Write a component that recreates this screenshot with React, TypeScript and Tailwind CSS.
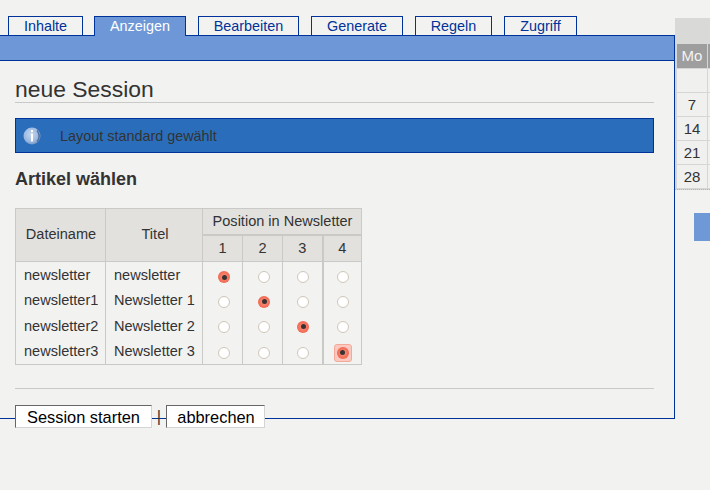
const tabs = [
  { label: 'Inhalte', width: 'w-[75px]' },
  { label: 'Anzeigen', width: 'w-[92px]', active: true },
  { label: 'Bearbeiten', width: 'w-[101px]' },
  { label: 'Generate', width: 'w-[92px]' },
  { label: 'Regeln', width: 'w-[77px]' },
  { label: 'Zugriff', width: 'w-[73px]' },
];

const rows = [
  { file: 'newsletter', title: 'newsletter', height: 'h-[25px]', text: 'pt-[3px]', radio: 'pt-[6px]' },
  { file: 'newsletter1', title: 'Newsletter 1', height: 'h-[26px]', text: 'pt-[3px]', radio: 'pt-[6px]' },
  { file: 'newsletter2', title: 'Newsletter 2', height: 'h-[26px]', text: 'pt-[3px]', radio: 'pt-[5px]' },
  { file: 'newsletter3', title: 'Newsletter 3', height: 'h-[26px]', text: 'pt-[2px]', radio: 'pt-[5px]' },
];

function InfoIcon() {
  return (
    <svg width="18" height="18" viewBox="0 0 18 18" className="shrink-0">
      <defs>
        <radialGradient id="globe" cx="0.45" cy="0.4" r="0.65">
          <stop offset="0" stopColor="#c4d7ef" />
          <stop offset="0.65" stopColor="#9db9e0" />
          <stop offset="1" stopColor="#6f8fbd" />
        </radialGradient>
      </defs>
      <circle cx="9" cy="9" r="8.5" fill="url(#globe)" />
      <path d="M14 3.5a8 8 0 0 1 0 11" fill="none" stroke="#4f6f9f" strokeWidth="1.5" />
      <rect x="8" y="3" width="2" height="2" fill="#ffffff" />
      <rect x="8" y="6.5" width="2" height="8" fill="#ffffff" />
    </svg>
  );
}

function Radio({ checked, focused }: { checked?: boolean; focused?: boolean }) {
  if (checked) {
    return (
      <span
        className={`flex items-center justify-center rounded-[3px] w-[18px] h-[18px] ${
          focused ? 'bg-[#fbc9bf] border border-[#f5a899]' : ''
        }`}
      >
        <span className="flex items-center justify-center w-[12px] h-[12px] rounded-full bg-[radial-gradient(circle,#f79a88_0%,#f4705a_55%,#ee553d_100%)]">
          <span className="block w-[5px] h-[5px] rounded-full bg-[#3a3230]" />
        </span>
      </span>
    );
  }
  return (
    <span className="flex items-center justify-center w-[18px] h-[18px]">
      <span className="block w-[12px] h-[12px] rounded-full bg-white border border-[#cfc6b8]" />
    </span>
  );
}

function PositionCell({ checked, focused, left, top, thick }: { checked?: boolean; focused?: boolean; left: string; top: string; thick?: boolean }) {
  return (
    <td className={`border-x border-[#c9c9c7] p-0 align-top ${thick ? 'border-l-2' : ''}`}>
      <div className={`flex ${left} ${top}`}>
        <Radio checked={checked} focused={focused} />
      </div>
    </td>
  );
}

function ArticleTable() {
  return (
    <table className="border-collapse table-fixed w-[346px] text-[14.55px] text-[#333333] border-b border-[#c9c9c7]">
      <colgroup>
        <col className="w-[90px]" />
        <col className="w-[97px]" />
        <col className="w-[40px]" />
        <col className="w-[40px]" />
        <col className="w-[40px]" />
        <col className="w-[39px]" />
      </colgroup>
      <thead>
        <tr className="h-[26px]">
          <th rowSpan={2} className="border border-[#c9c9c7] bg-[#e2e1de] font-normal p-0 pl-[1px]">Dateiname</th>
          <th rowSpan={2} className="border border-[#c9c9c7] bg-[#e2e1de] font-normal p-0 pl-[2px]">Titel</th>
          <th colSpan={4} className="border border-[#c9c9c7] border-b-2 bg-[#e2e1de] font-normal p-0 pt-[1px] pl-[1px]">Position in Newsletter</th>
        </tr>
        <tr className="h-[27px]">
          {[1, 2, 3, 4].map((n) => (
            <th key={n} className={`border border-[#c9c9c7] bg-[#e2e1de] font-normal p-0 pt-[1px] ${n === 4 ? 'border-l-2' : ''}`}>{n}</th>
          ))}
        </tr>
      </thead>
      <tbody>
        {rows.map((row, i) => (
          <tr key={row.file} className={row.height}>
            <td className="border-x border-[#c9c9c7] p-0 pl-[8px] align-top">
              <div className={`${row.text} leading-[20px]`}>{row.file}</div>
            </td>
            <td className="border-x border-[#c9c9c7] p-0 pl-[8px] align-top">
              <div className={`${row.text} leading-[20px]`}>{row.title}</div>
            </td>
            <PositionCell left="pl-[12px]" top={row.radio} checked={i === 0} />
            <PositionCell left="pl-[12px]" top={row.radio} checked={i === 1} />
            <PositionCell left="pl-[11px]" top={row.radio} checked={i === 2} />
            <PositionCell left="pl-[10px]" top={row.radio} checked={i === 3} focused={i === 3} thick />
          </tr>
        ))}
      </tbody>
    </table>
  );
}

function Calendar() {
  return (
    <div className="w-[35px] shrink-0 pt-[18px]">
      <div className="h-[26px] bg-[#d9d9d8]" />
      <div className="bg-[#d6d6d5] pl-[2px] flex flex-col gap-[1px] pb-[1px] border-b border-dotted border-[#b5b5b5]">
        <div className="flex gap-[1px]">
          <div className="w-[30px] h-[24px] bg-[#9e9e9e] text-[#f4f4f4] text-[15px] leading-[24px] text-center">Mo</div>
          <div className="flex-1 bg-[#9e9e9e]" />
        </div>
        {['', '7', '14', '21', '28'].map((day, i) => (
          <div key={i} className="flex gap-[1px]">
            <div className="w-[30px] h-[23px] bg-[#f0f0ef] text-[#333333] text-[15px] leading-[23px] text-center">{day}</div>
            <div className="flex-1 bg-[#f0f0ef]" />
          </div>
        ))}
      </div>
      <div className="mt-[23px] ml-[19px] h-[28px] bg-[#6f98d6]" />
    </div>
  );
}

export default function App() {
  return (
    <div className="w-[710px] h-[490px] overflow-hidden flex bg-[#f2f2f1] font-['Liberation_Sans',sans-serif]">
      <div className="w-[675px] shrink-0 pt-[16px]">
        <div className="flex gap-[11px] pl-[8px] h-[20px] relative z-10">
          {tabs.map((tab, i) => (
            <div
              key={tab.label}
              className={`${tab.width} h-[20px] border border-[#003399] text-[14.4px] leading-[19px] text-center ${
                tab.active ? 'bg-[#6d97d6] text-white border-b-0' : 'bg-[#f2f2f1] text-[#003399]'
              } ${i > 1 ? 'ml-[1px]' : ''}`}
            >
              {tab.label}
            </div>
          ))}
        </div>
        <div className="-mt-[1px] h-[384px] border-t border-r border-b border-[#003399]">
          <div className="h-[25px] bg-[#6d97d6] border-b border-[#003399]" />
          <div className="px-[15px] w-[654px] box-content">
            <h1 className="w-[639px] mt-[16px] h-[26px] border-b border-[#c9c9c7] text-[22.9px] leading-[25px] text-[#333333]">
              neue Session
            </h1>
            <div className="w-[639px] mt-[15px] h-[35px] flex items-center pl-[7px] pt-[1px] bg-[#2a6ebb] border border-[#003399] text-[14.4px] text-[#333333]">
              <InfoIcon />
              <span className="ml-[19px] pt-[1px]">Layout standard gewählt</span>
            </div>
            <h2 className="mt-[15px] text-[18px] leading-[22px] font-bold text-[#333333]">Artikel wählen</h2>
            <div className="mt-[18px]">
              <ArticleTable />
            </div>
            <div className="w-[639px] mt-[23px] border-t border-[#c9c9c7]" />
            <div className="flex items-center mt-[16px] h-[23px] text-[16.4px] text-black">
              <button className="w-[137px] h-[23px] pt-[1px] bg-white border border-t-[#666666] border-l-[#666666] border-r-[#d4d4d4] border-b-[#d4d4d4] leading-none">
                Session starten
              </button>
              <span className="w-[14px] text-center text-[#333333] leading-none">|</span>
              <button className="w-[99px] h-[23px] pt-[1px] pl-[1px] bg-white border border-t-[#666666] border-l-[#666666] border-r-[#d4d4d4] border-b-[#d4d4d4] leading-none">
                abbrechen
              </button>
            </div>
          </div>
        </div>
      </div>
      <Calendar />
    </div>
  );
}
